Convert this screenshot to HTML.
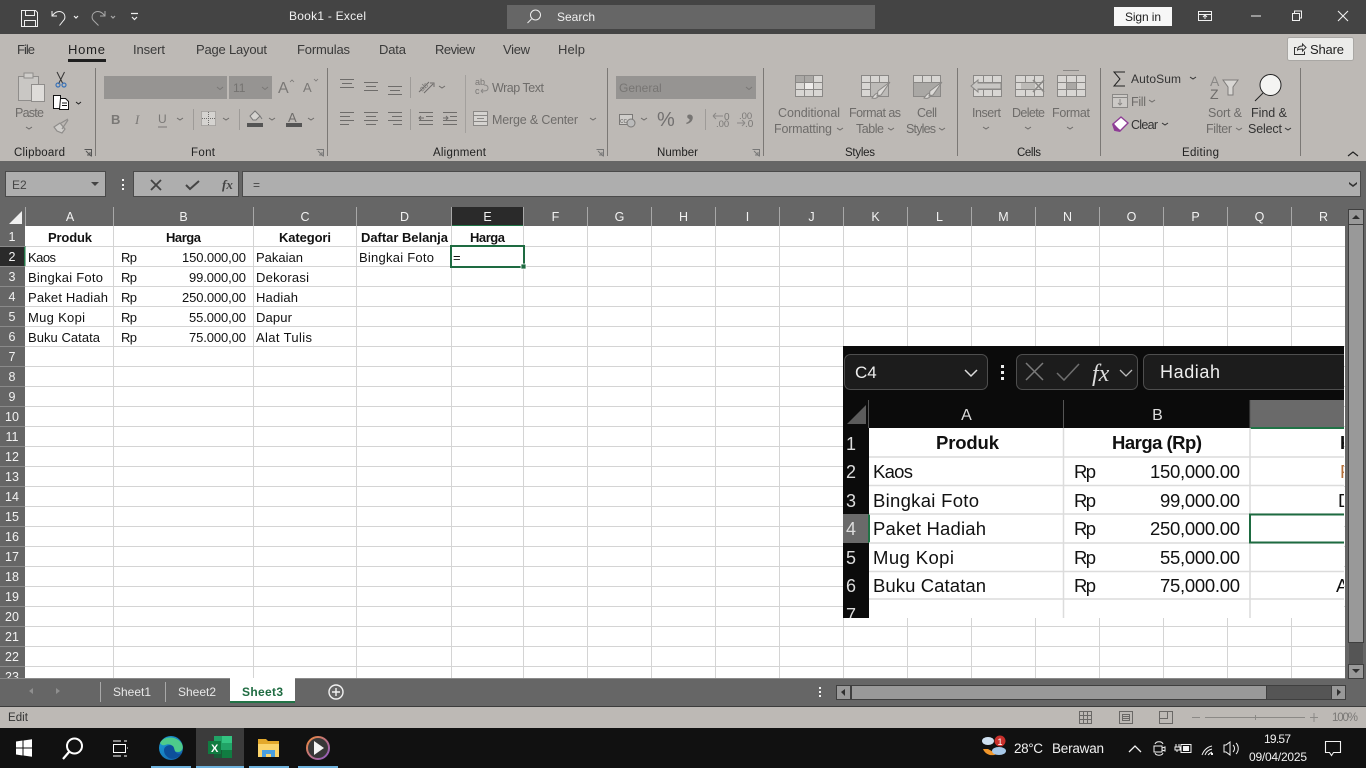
<!DOCTYPE html>
<html><head><meta charset="utf-8"><title>Book1 - Excel</title>
<style>
html,body{margin:0;padding:0;width:1366px;height:768px;overflow:hidden;background:#666}
svg{display:block;font-family:"Liberation Sans",sans-serif}
.r{font-size:13px;fill:#3a3a3a}
.d{font-size:12.5px;fill:#6e6c6a}
.c{font-size:13px;fill:#111}
.b{font-size:13px;fill:#111;font-weight:bold}
.h{font-size:12.5px;fill:#f2f2f2;text-anchor:middle}
.e{font-size:18.5px;fill:#111}
.ln{fill:none;stroke:#6e6c6a;stroke-width:1}
</style></head><body>
<svg width="1366" height="768" viewBox="0 0 1366 768" xmlns="http://www.w3.org/2000/svg">
<rect width="1366" height="768" fill="#666"/>
<!-- title bar -->
<rect width="1366" height="34" fill="#444"/>
<g fill="none" stroke="#f0f0f0" stroke-width="1">
<path d="M21.5 10.5h14l2 2v14h-16zM25.5 10.5v5h9v-5M24.5 26.5v-6h11v6"/>
<path d="M52 11v5h5M52.5 15.5c3-4 7-5 10-3 3 2 3 6 1 8l-4 5"/>
<path d="M74 16l2 2 2-2" stroke-width="1.2"/>
<path d="M105 11v5h-5M104.500 15.500c-3-4-7-5-10-3-3 2-3 6-1 8l5 5" stroke="#a8a8a8"/>
<path d="M111 16l2 2 2-2" stroke="#a8a8a8" stroke-width="1.2"/>
<path d="M131 13.500h7M132 17l2.500 2.500 2.500-2.500" stroke-width="1.2"/>
</g>
<text x="289" y="20" font-size="12" fill="#f2f2f2" textLength="77">Book1  -  Excel</text>
<rect x="507" y="5" width="368" height="24" fill="#666"/>
<circle cx="535.500" cy="15" r="5" fill="none" stroke="#eee"/><path d="M531.500 19l-4 4" stroke="#eee"/>
<text x="557" y="21" font-size="12" fill="#f0f0f0" textLength="38">Search</text>
<rect x="1114" y="7" width="58" height="19" fill="#f7f7f7"/>
<text x="1125" y="21" font-size="12" fill="#222" textLength="36">Sign in</text>
<g fill="none" stroke="#f0f0f0">
<path d="M1198.500 11.500h13v9h-13zM1198.500 14.500h13M1205 19v-4M1203 17l2-2 2 2"/>
<path d="M1251 16h10"/>
<path d="M1292.500 13.500h7v7h-7zM1294.500 13v-2h7v7h-2"/>
<path d="M1338 11l10 10M1348 11l-10 10" stroke-width="1.100"/>
</g>
<!-- ribbon -->
<rect y="34" width="1366" height="127" fill="#bdb9b5"/>
<text class="r" x="17" y="54" textLength="18">File</text>
<text class="r" x="68" y="54" textLength="37" style="fill:#1f1f1f">Home</text>
<text class="r" x="133" y="54" textLength="32">Insert</text>
<text class="r" x="196" y="54" textLength="71">Page Layout</text>
<text class="r" x="297" y="54" textLength="53">Formulas</text>
<text class="r" x="379" y="54" textLength="27">Data</text>
<text class="r" x="435" y="54" textLength="40">Review</text>
<text class="r" x="503" y="54" textLength="27">View</text>
<text class="r" x="558" y="54" textLength="27">Help</text>
<rect x="68" y="59" width="38" height="3" fill="#1f1f1f"/>
<rect x="1287.500" y="37.500" width="66" height="23" rx="2" fill="#ececea" stroke="#a9a7a4"/>
<path d="M1296.500 47.500h-2v7h10v-3M1297.500 50c0-3 2-4 5-4v-2l3.500 3.500-3.500 3.500v-2c-2 0-4 0-5 1z" fill="none" stroke="#333"/>
<text x="1310" y="54" font-size="13" fill="#222" textLength="34">Share</text>
<!-- separators -->
<g stroke="#7b7875" stroke-width="1">
<path d="M95.500 68v88M327.500 68v88M607.500 68v88M763.500 68v88M957.500 68v88M1100.500 68v88M1300.500 68v88"/>
<path d="M465.500 75v58" stroke="#a3a09d"/>
<path d="M193.500 109v21M239.500 109v21M410.500 77v21M410.500 109v21M705.500 109v21" stroke="#9e9b98"/>
</g>
<!-- clipboard -->
<rect x="18.500" y="76.500" width="20" height="24" fill="#c9c7c4" stroke="#8f8d8b"/>
<rect x="24" y="73" width="9" height="5" fill="#cfcdca" stroke="#8f8d8b"/>
<rect x="31.500" y="84.500" width="13" height="17" fill="#dedcd9" stroke="#8f8d8b"/>
<text class="d" x="15" y="117" textLength="29">Paste</text>
<path class="ln" d="M26 127l3 2 3-2"/>
<path d="M57 72l6 12M64.500 72l-6 12" stroke="#333" fill="none"/>
<circle cx="58" cy="85" r="2" fill="none" stroke="#3a73b8" stroke-width="1.200"/><circle cx="64" cy="85" r="2" fill="none" stroke="#3a73b8" stroke-width="1.200"/>
<rect x="53.500" y="95.500" width="7" height="13" fill="#fff" stroke="#111"/>
<path d="M60.500 98.500h5l3 3v8h-9z" fill="#fff" stroke="#111"/><path d="M62 103h5M62 105.500h5" stroke="#111"/>
<path d="M76 102l2.500 2 2.500-2" fill="none" stroke="#222"/>
<path d="M54 127l6-4 5 6-3 4-5-2zM61 123l7-4M62 129l6-9" fill="#d0cecb" stroke="#8f8d8b" stroke-width="1.200"/>
<text x="14" y="156" font-size="11.500" fill="#222" textLength="51">Clipboard</text>
<path d="M84.500 149.500h7v7M86 151l5 5M90 152v3h-3" fill="none" stroke="#555"/>
<!-- font -->
<rect x="104" y="76" width="123" height="23" fill="#969492"/>
<rect x="229" y="76" width="43" height="23" fill="#969492"/>
<path d="M217 87l3 2.500 3-2.500M262 87l3 2.500 3-2.500" fill="none" stroke="#7a7876"/>
<text x="233" y="92" font-size="12" fill="#747270">11</text>
<text x="278" y="93" font-size="16" fill="#7a7876">A</text><text x="303" y="92" font-size="13" fill="#7a7876">A</text>
<path d="M290 82l2-2 2 2M314 79l2 2 2-2" fill="none" stroke="#7a7876" stroke-width=".8"/>
<text x="111" y="124" font-size="13" font-weight="bold" fill="#7a7876">B</text>
<text x="135" y="124" font-size="13" font-style="italic" fill="#7a7876" font-family="Liberation Serif">I</text>
<text x="158" y="123" font-size="12" fill="#7a7876">U</text><path d="M158 127h9" stroke="#7a7876"/>
<path d="M177 118l3 2 3-2M223 118l3 2 3-2M269 118l3 2 3-2M308 118l3 2 3-2" fill="none" stroke="#6e6c6a"/>
<rect x="201.500" y="111.500" width="14" height="14" fill="#d5d3d0" stroke="#8a8886" stroke-dasharray="1 1"/>
<path d="M208.500 112v13M202 118.500h13" stroke="#6e6c6a" stroke-dasharray="1 1"/>
<path d="M250 116l5-5 5 5-4 4h-3zM260 116l2 3" fill="#d5d3d0" stroke="#777"/>
<rect x="247" y="123" width="16" height="4" fill="#555"/>
<text x="288" y="122" font-size="13" fill="#6e6c6a">A</text>
<rect x="286" y="123" width="16" height="4" fill="#555"/>
<text x="191" y="156" font-size="11.500" fill="#222" textLength="24">Font</text>
<path d="M316.500 149.500h7v7M318 151l5 5M322 152v3h-3" fill="none" stroke="#777"/>
<!-- alignment -->
<g class="ln" stroke="#7a7876">
<path d="M340 79.500h14M342 83.500h10M340 87.500h14M364 82.500h14M366 86.500h10M364 90.500h14M388 86.500h14M390 90.500h10M388 94.500h14"/>
<path d="M340 112.500h14M340 116.500h10M340 120.500h14M340 124.500h9M364 112.500h14M366 116.500h10M364 120.500h14M366 124.500h10M388 112.500h14M392 116.500h10M388 120.500h14M393 124.500h9"/>
<path d="M419 112.500h14M426 116.500h7M419 120.500h14M419 124.500h14M419 118h5M421 116l-2 2 2 2M443 112.500h14M450 116.500h7M443 120.500h14M443 124.500h14M443 118h5M446 116l2 2-2 2"/>
<path d="M419 92l10-10M424 93l9-9M430 83h4v4"/>
<path d="M439 86l3 2 3-2"/>
<path d="M590 118l3 2 3-2"/>
</g>
<text x="419" y="90" font-size="8" fill="#7a7876" transform="rotate(-45 423 87)">ab</text>
<text x="475" y="85" font-size="9" fill="#7a7876">ab</text><text x="475" y="94" font-size="9" fill="#7a7876">c</text>
<path d="M481 91c5 0 7 0 7-3s-3-3-4-3M481 91l2-2M481 91l2 2" fill="none" stroke="#8a8886"/>
<text class="d" x="492" y="92" textLength="52">Wrap Text</text>
<rect x="473.500" y="111.500" width="14" height="14" fill="#d5d3d0" stroke="#8a8886"/>
<path d="M474 115.500h13M474 121.500h13M477 118.500h7" stroke="#8a8886"/>
<text class="d" x="492" y="124" textLength="86">Merge &amp; Center</text>
<text x="433" y="156" font-size="11.500" fill="#222" textLength="53">Alignment</text>
<path d="M596.500 149.500h7v7M598 151l5 5M602 152v3h-3" fill="none" stroke="#777"/>
<!-- number -->
<rect x="616" y="76" width="140" height="23" fill="#969492"/>
<text x="619" y="92" font-size="12" fill="#777573">General</text>
<path d="M746 87l3 2.500 3-2.500" fill="none" stroke="#7a7876"/>
<rect x="619.500" y="114.500" width="13" height="10" fill="#cfcdca" stroke="#7a7876"/><text x="620" y="123" font-size="7" fill="#6e6c6a">cc</text>
<ellipse cx="631" cy="123" rx="4" ry="4" fill="#bbb" stroke="#7a7876"/>
<path d="M641 118l3 2 3-2" fill="none" stroke="#6e6c6a"/>
<text x="657" y="126" font-size="20" fill="#727070" textLength="17">%</text>
<text x="686" y="119" font-size="32" font-weight="bold" fill="#777573" font-family="Liberation Serif">,</text>
<text x="724" y="120" font-size="10" fill="#7a7876">0</text><text x="716" y="127" font-size="9.500" fill="#7a7876">.00</text>
<path d="M713 116h10M713 116l3-3M713 116l3 3" stroke="#8a8886" fill="none"/>
<text x="739" y="119" font-size="9.500" fill="#7a7876">.00</text><text x="745" y="127" font-size="10" fill="#7a7876">.0</text>
<path d="M737 123h8M745 123l-3-3M745 123l-3 3" stroke="#8a8886" fill="none"/>
<text x="657" y="156" font-size="11.500" fill="#222" textLength="41">Number</text>
<path d="M752.500 149.500h7v7M754 151l5 5M758 152v3h-3" fill="none" stroke="#777"/>
<!-- styles -->
<g fill="#d8d6d3" stroke="#8a8886">
<rect x="795.500" y="75.500" width="27" height="21"/>
<path fill="none" d="M795 82.500h28M795 89.500h28M804.500 75v22M813.500 75v22"/>
<rect x="805" y="83" width="8" height="6" fill="#eeecea" stroke="none"/>
<rect x="796" y="76" width="8" height="6" fill="#aaa8a5" stroke="none"/>
<rect x="805" y="76" width="8" height="6" fill="#aaa8a5" stroke="none"/>
<rect x="861.500" y="75.500" width="27" height="21"/>
<path fill="none" d="M861 82.500h28M861 89.500h28M870.500 75v22M879.500 75v22"/>
<rect x="871" y="83" width="17" height="13" fill="#bcbab7" stroke="none"/>
<path d="M890 82l-9 13-4 1 1-5zM878 93c-3 0-4 3-6 5 3 1 6 0 7-3" fill="#dddbd8"/>
<rect x="913.500" y="75.500" width="27" height="21"/>
<path fill="none" d="M913 82.500h28M913 89.500h28M922.500 75v22M931.500 75v22"/>
<rect x="914" y="83" width="26" height="13" fill="#aaa8a5" stroke="none"/>
<path d="M942 82l-9 13-4 1 1-5zM930 93c-3 0-4 3-6 5 3 1 6 0 7-3" fill="#dddbd8"/>
</g>
<text class="d" x="778" y="117" textLength="62">Conditional</text>
<text class="d" x="774" y="133" textLength="58">Formatting</text><path class="ln" d="M837 128l3 2 3-2"/>
<text class="d" x="849" y="117" textLength="52">Format as</text>
<text class="d" x="856" y="133" textLength="28">Table</text><path class="ln" d="M888 128l3 2 3-2"/>
<text class="d" x="917" y="117" textLength="20">Cell</text>
<text class="d" x="906" y="133" textLength="30">Styles</text><path class="ln" d="M939 128l3 2 3-2"/>
<text x="845" y="156" font-size="11.500" fill="#222" textLength="30">Styles</text>
<!-- cells -->
<g fill="#d8d6d3" stroke="#8a8886">
<rect x="973.500" y="75.500" width="28" height="21"/><path fill="none" d="M973 82.500h29M973 89.500h29M983.500 75v22M992.500 75v22"/>
<path d="M971 86l7-6v3h23v6h-23v3z" fill="#c8c6c3"/>
<rect x="1015.500" y="75.500" width="28" height="21"/><path fill="none" d="M1015 82.500h29M1015 89.500h29M1025.500 75v22M1034.500 75v22"/>
<rect x="1021" y="83" width="14" height="6" fill="#bcbab7" stroke="none"/>
<path d="M1033 80l11 12M1044 80l-11 12" fill="none" stroke-width="1.600"/>
<rect x="1057.500" y="75.500" width="28" height="21"/><path fill="none" d="M1057 82.500h29M1057 89.500h29M1066.500 75v22M1076.500 75v22M1063 70.500h16"/>
<rect x="1067" y="83" width="9" height="6" fill="#aaa8a5" stroke="none"/>
</g>
<text class="d" x="972" y="117" textLength="29">Insert</text>
<text class="d" x="1012" y="117" textLength="33">Delete</text>
<text class="d" x="1052" y="117" textLength="38">Format</text>
<path class="ln" d="M983 127l3 2 3-2M1025 127l3 2 3-2M1067 127l3 2 3-2"/>
<text x="1017" y="156" font-size="11.500" fill="#222" textLength="24">Cells</text>
<!-- editing -->
<path d="M1125 72h-11l6 7-6 7h11" fill="none" stroke="#222"/>
<text x="1131" y="83" font-size="12" fill="#333" textLength="50">AutoSum</text>
<path d="M1190 77l3 2 3-2" fill="none" stroke="#333"/>
<rect x="1112.500" y="94.500" width="15" height="13" fill="#ccc9c6" stroke="#8a8886"/>
<path d="M1113 97.500h14M1120 99v6M1118 103l2 2 2-2" fill="none" stroke="#8a8886"/>
<text class="d" x="1131" y="106" textLength="15">Fill</text><path class="ln" d="M1149 100l3 2 3-2"/>
<path d="M1113 124l8-7 7 6-8 8z" fill="#fff" stroke="#8e3d96" stroke-width="1.400"/>
<path d="M1113 124l4 5 3 2-5-1z" fill="#a84aae" stroke="#8e3d96" stroke-width="2"/>
<text x="1131" y="129" font-size="12.500" fill="#333" textLength="27">Clear</text>
<path d="M1162 123l3 2 3-2" fill="none" stroke="#333"/>
<text x="1210" y="86" font-size="14" fill="#8a8886">A</text><text x="1210" y="99" font-size="14" fill="#6e6c6a">Z</text>
<path d="M1223 80h15l-5 7v8h-5v-8z" fill="#d8d6d3" stroke="#7e7c7a"/>
<circle cx="1270.500" cy="85" r="10.500" fill="#f4f4f2" stroke="#222"/><path d="M1263 93l-8 8" stroke="#222"/>
<text class="d" x="1208" y="117" textLength="34">Sort &amp;</text>
<text class="d" x="1206" y="133" textLength="26">Filter</text><path class="ln" d="M1236 128l3 2 3-2"/>
<text x="1251" y="117" font-size="12.500" fill="#333" textLength="36">Find &amp;</text>
<text x="1248" y="133" font-size="12.500" fill="#333" textLength="34">Select</text><path d="M1285 128l3 2 3-2" fill="none" stroke="#333"/>
<text x="1182" y="156" font-size="11.500" fill="#222" textLength="37">Editing</text>
<path d="M1348 156l5-4 5 4" fill="none" stroke="#222" stroke-width="1.200"/>
<!-- formula bar -->
<rect x="5.500" y="171.500" width="100" height="25" fill="#aeaeae" stroke="#4a4a4a"/>
<text x="12" y="189" font-size="12" fill="#444">E2</text>
<path d="M91 182h8l-4 4z" fill="#444"/>
<rect x="122" y="179" width="2" height="2" fill="#f5f5f5"/><rect x="122" y="184" width="2" height="2" fill="#f5f5f5"/><rect x="122" y="188" width="2" height="2" fill="#f5f5f5"/>
<rect x="133.500" y="171.500" width="105" height="25" fill="#aeaeae" stroke="#4a4a4a"/>
<rect x="242.500" y="171.500" width="1118" height="25" fill="#aeaeae" stroke="#4a4a4a"/>
<path d="M151 180l10 10M161 180l-10 10" stroke="#444" stroke-width="1.800"/>
<path d="M186 185l4 4 9-8" fill="none" stroke="#444" stroke-width="2"/>
<text x="222" y="189" font-size="13" font-style="italic" font-weight="bold" fill="#444" font-family="Liberation Serif">fx</text>
<text x="253" y="189" font-size="12" fill="#444">=</text>
<path d="M1349 182l4 3 4-3v2l-4 3-4-3z" fill="#333"/>
<!-- col headers -->
<rect y="207" width="1345" height="19" fill="#666"/>
<rect x="451" y="207" width="72" height="19" fill="#2a2a2a"/>
<rect x="451" y="225" width="72" height="1.500" fill="#217346"/>
<path d="M9 224l13-13v13z" fill="#f0f0f0"/>
<g stroke="#a8a8a8"><path d="M25.500 207v19M113.500 207v19M253.500 207v19M356.500 207v19M451.500 207v19M523.500 207v19M587.500 207v19M651.500 207v19M715.500 207v19M779.500 207v19M843.500 207v19M907.500 207v19M971.500 207v19M1035.500 207v19M1099.500 207v19M1163.500 207v19M1227.500 207v19M1291.500 207v19"/></g>
<text class="h" x="70" y="221">A</text><text class="h" x="183.500" y="221">B</text><text class="h" x="305" y="221">C</text><text class="h" x="404.500" y="221">D</text><text class="h" x="487.500" y="221">E</text><text class="h" x="555.500" y="221">F</text><text class="h" x="619.500" y="221">G</text><text class="h" x="683.500" y="221">H</text><text class="h" x="747.500" y="221">I</text><text class="h" x="811.500" y="221">J</text><text class="h" x="875.500" y="221">K</text><text class="h" x="939.500" y="221">L</text><text class="h" x="1003.500" y="221">M</text><text class="h" x="1067.500" y="221">N</text><text class="h" x="1131.500" y="221">O</text><text class="h" x="1195.500" y="221">P</text><text class="h" x="1259.500" y="221">Q</text><text class="h" x="1323.500" y="221">R</text>
<!-- sheet -->
<rect x="25" y="226" width="1320" height="452" fill="#fff"/>
<g stroke="#d4d4d4">
<path d="M25 246.500h1320M25 266.500h1320M25 286.500h1320M25 306.500h1320M25 326.500h1320M25 346.500h1320M25 366.500h1320M25 386.500h1320M25 406.500h1320M25 426.500h1320M25 446.500h1320M25 466.500h1320M25 486.500h1320M25 506.500h1320M25 526.500h1320M25 546.500h1320M25 566.500h1320M25 586.500h1320M25 606.500h1320M25 626.500h1320M25 646.500h1320M25 666.500h1320"/>
<path d="M113.500 226v452M253.500 226v452M356.500 226v452M451.500 226v452M523.500 226v452M587.500 226v452M651.500 226v452M715.500 226v452M779.500 226v452M843.500 226v452M907.500 226v452M971.500 226v452M1035.500 226v452M1099.500 226v452M1163.500 226v452M1227.500 226v452M1291.500 226v452"/>
</g>
<!-- row headers -->
<rect y="226" width="25" height="452" fill="#666"/>
<rect y="246" width="25" height="20" fill="#2a2a2a"/><rect x="24" y="246" width="1.500" height="20" fill="#217346"/>
<path stroke="#8a8a8a" d="M0 246.500h25M0 266.500h25M0 286.500h25M0 306.500h25M0 326.500h25M0 346.500h25M0 366.500h25M0 386.500h25M0 406.500h25M0 426.500h25M0 446.500h25M0 466.500h25M0 486.500h25M0 506.500h25M0 526.500h25M0 546.500h25M0 566.500h25M0 586.500h25M0 606.500h25M0 626.500h25M0 646.500h25M0 666.500h25"/>
<g>
<text class="h" x="12" y="241">1</text><text class="h" x="12" y="261">2</text><text class="h" x="12" y="281">3</text><text class="h" x="12" y="301">4</text><text class="h" x="12" y="321">5</text><text class="h" x="12" y="341">6</text><text class="h" x="12" y="361">7</text><text class="h" x="12" y="381">8</text><text class="h" x="12" y="401">9</text><text class="h" x="12" y="421">10</text><text class="h" x="12" y="441">11</text><text class="h" x="12" y="461">12</text><text class="h" x="12" y="481">13</text><text class="h" x="12" y="501">14</text><text class="h" x="12" y="521">15</text><text class="h" x="12" y="541">16</text><text class="h" x="12" y="561">17</text><text class="h" x="12" y="581">18</text><text class="h" x="12" y="601">19</text><text class="h" x="12" y="621">20</text><text class="h" x="12" y="641">21</text><text class="h" x="12" y="661">22</text>
</g>
<svg x="0" y="667" width="25" height="11"><text class="h" x="12" y="14">23</text></svg>
<!-- cell text -->
<text class="b" x="48" y="242" textLength="44">Produk</text>
<text class="b" x="166" y="242" textLength="35">Harga</text>
<text class="b" x="279" y="242" textLength="52">Kategori</text>
<text class="b" x="361" y="242" textLength="87">Daftar Belanja</text>
<text class="b" x="470" y="242" textLength="35">Harga</text>
<text class="c" x="28" y="262" textLength="28">Kaos</text>
<text class="c" x="28" y="282" textLength="75">Bingkai Foto</text>
<text class="c" x="28" y="302" textLength="80">Paket Hadiah</text>
<text class="c" x="28" y="322" textLength="57">Mug Kopi</text>
<text class="c" x="28" y="342" textLength="72">Buku Catata</text>
<text class="c" x="121" y="262" textLength="16">Rp</text><text class="c" x="121" y="282" textLength="16">Rp</text><text class="c" x="121" y="302" textLength="16">Rp</text><text class="c" x="121" y="322" textLength="16">Rp</text><text class="c" x="121" y="342" textLength="16">Rp</text>
<text class="c" x="182" y="262" textLength="64">150.000,00</text>
<text class="c" x="189" y="282" textLength="57">99.000,00</text>
<text class="c" x="182" y="302" textLength="64">250.000,00</text>
<text class="c" x="189" y="322" textLength="57">55.000,00</text>
<text class="c" x="189" y="342" textLength="57">75.000,00</text>
<text class="c" x="256" y="262" textLength="47">Pakaian</text>
<text class="c" x="256" y="282" textLength="53">Dekorasi</text>
<text class="c" x="256" y="302" textLength="42">Hadiah</text>
<text class="c" x="256" y="322" textLength="36">Dapur</text>
<text class="c" x="256" y="342" textLength="56">Alat Tulis</text>
<text class="c" x="359" y="262" textLength="75">Bingkai Foto</text>
<text class="c" x="453" y="262">=</text>
<rect x="451" y="246" width="73" height="21" fill="none" stroke="#1e6b41" stroke-width="2"/>
<rect x="521" y="264" width="5" height="5" fill="#1e6b41" stroke="#fff" stroke-width=".8"/>
<!-- embedded screenshot -->
<svg x="843" y="346" width="501" height="272" viewBox="843 346 501 272">
<rect x="843" y="346" width="501" height="272" fill="#fff"/>
<rect x="843" y="346" width="501" height="82" fill="#0b0b0b"/>
<rect x="844.500" y="354.500" width="143" height="35" rx="6" fill="#1c1c1c" stroke="#4e4e4e"/>
<text x="855" y="378" font-size="17" fill="#eee">C4</text>
<path d="M965 370l6 6 6-6" fill="none" stroke="#ddd" stroke-width="1.500"/>
<rect x="1001" y="365" width="3" height="3" fill="#eee"/><rect x="1001" y="371" width="3" height="3" fill="#eee"/><rect x="1001" y="377" width="3" height="3" fill="#eee"/>
<rect x="1016.500" y="354.500" width="121" height="35" rx="6" fill="#1c1c1c" stroke="#4e4e4e"/>
<rect x="1143.500" y="354.500" width="220" height="35" rx="6" fill="#1c1c1c" stroke="#4e4e4e"/>
<path d="M1026 363l17 17M1043 363l-17 17" stroke="#7a7a7a" stroke-width="1.500"/>
<path d="M1057 373l7 7 15-16" fill="none" stroke="#6e6e6e" stroke-width="1.500"/>
<text x="1092" y="381" font-size="24" font-style="italic" fill="#ddd" font-family="Liberation Serif">fx</text>
<path d="M1120 370l6 6 6-6" fill="none" stroke="#bbb" stroke-width="1.300"/>
<text x="1160" y="378" font-size="18" fill="#eee" textLength="60">Hadiah</text>
<rect x="843" y="400" width="501" height="28" fill="#0b0b0b"/>
<rect x="1250" y="400" width="94" height="28" fill="#6a6a6a"/>
<rect x="1250" y="427" width="94" height="2" fill="#217346"/>
<path d="M847 424l19-19v19z" fill="#5c5c5c"/>
<path d="M868.500 400v218M1063.500 400v28M1250 400v28" stroke="#555"/>
<text x="966.500" y="420" font-size="16" fill="#ddd" text-anchor="middle">A</text><text x="1157.500" y="420" font-size="16" fill="#ddd" text-anchor="middle">B</text>
<rect x="843" y="428" width="26" height="190" fill="#0b0b0b"/>
<rect x="843" y="514" width="26" height="29" fill="#6a6a6a"/><rect x="868" y="514" width="2" height="29" fill="#217346"/>
<g font-size="18" fill="#ddd" text-anchor="middle"><text x="851" y="450">1</text><text x="851" y="478">2</text><text x="851" y="507">3</text><text x="851" y="535">4</text><text x="851" y="564">5</text><text x="851" y="592">6</text><text x="851" y="621">7</text></g>
<g stroke="#dcdcdc" stroke-width="1.500"><path d="M869 457h475M869 485.500h475M869 514h475M869 543h475M869 571.500h475M869 599h475M1063.500 428v190M1250 428v190"/></g>
<text class="e" x="936" y="449" font-weight="bold" textLength="63">Produk</text>
<text class="e" x="1112" y="449" font-weight="bold" textLength="90">Harga (Rp)</text>
<text class="e" x="873" y="478" textLength="40">Kaos</text><text class="e" x="873" y="507" textLength="106">Bingkai Foto</text><text class="e" x="873" y="535" textLength="113">Paket Hadiah</text><text class="e" x="873" y="564" textLength="81">Mug Kopi</text><text class="e" x="873" y="592" textLength="113">Buku Catatan</text>
<text class="e" x="1074" y="478" textLength="22">Rp</text><text class="e" x="1074" y="507" textLength="22">Rp</text><text class="e" x="1074" y="535" textLength="22">Rp</text><text class="e" x="1074" y="564" textLength="22">Rp</text><text class="e" x="1074" y="592" textLength="22">Rp</text>
<text class="e" x="1150" y="478" textLength="90">150,000.00</text><text class="e" x="1160" y="507" textLength="80">99,000.00</text><text class="e" x="1150" y="535" textLength="90">250,000.00</text><text class="e" x="1160" y="564" textLength="80">55,000.00</text><text class="e" x="1160" y="592" textLength="80">75,000.00</text>
<rect x="1250" y="514.500" width="100" height="28" fill="none" stroke="#1e6b41" stroke-width="2"/>
<text class="e" x="1340" y="449" font-weight="bold">K</text><text class="e" x="1340" y="478" style="fill:#b5703a">P</text><text class="e" x="1338" y="507">D</text><text class="e" x="1336" y="592">A</text>
</svg>
<!-- right bar & vertical scrollbar -->
<rect x="1345" y="207" width="21" height="500" fill="#666"/>
<rect x="1348.500" y="209.500" width="15" height="15" fill="#999" stroke="#3f3f3f"/><path d="M1352 219l4-4 4 4z" fill="#2f2f2f"/>
<rect x="1348.500" y="224.500" width="15" height="418" fill="#999" stroke="#3f3f3f"/>
<rect x="1349" y="643" width="14" height="21" fill="#555"/>
<rect x="1348.500" y="664.500" width="15" height="14" fill="#999" stroke="#3f3f3f"/><path d="M1352 669l4 4 4-4z" fill="#2f2f2f"/>
<!-- sheet tabs -->
<rect y="678" width="1345" height="28" fill="#666"/>
<path d="M0 678.500h1345" stroke="#8a8a8a"/>
<path d="M33 688v6l-4-3zM56 688v6l4-3z" fill="#8f8f8f"/>
<path stroke="#a8a8a8" d="M100.500 682v20M165.500 682v20"/>
<text x="113" y="696" font-size="12" fill="#e8e8e8" textLength="38">Sheet1</text>
<text x="178" y="696" font-size="12" fill="#e8e8e8" textLength="38">Sheet2</text>
<rect x="230" y="678" width="65" height="25" fill="#fff"/><rect x="230" y="701" width="65" height="2" fill="#217346"/>
<text x="242" y="696" font-size="12" font-weight="bold" fill="#1e6b41" textLength="41">Sheet3</text>
<circle cx="336" cy="692" r="7" fill="none" stroke="#f2f2f2" stroke-width="1.400"/><path d="M332 692h8M336 688v8" stroke="#f2f2f2" stroke-width="1.400"/>
<rect x="819" y="687" width="2" height="2" fill="#f2f2f2"/><rect x="819" y="691" width="2" height="2" fill="#f2f2f2"/><rect x="819" y="695" width="2" height="2" fill="#f2f2f2"/>
<rect x="836.500" y="685.500" width="14" height="14" fill="#999" stroke="#3f3f3f"/><path d="M841 692l4-3v7z" fill="#2f2f2f"/>
<rect x="851.500" y="685.500" width="415" height="14" fill="#999" stroke="#3f3f3f"/>
<rect x="1267" y="686" width="64" height="13" fill="#555"/>
<rect x="1331.500" y="685.500" width="14" height="14" fill="#999" stroke="#3f3f3f"/><path d="M1341 692l-4-3v7z" fill="#2f2f2f"/>
<path d="M1331 685.500h-65M1331 699.500h-65" stroke="#3f3f3f"/>
<!-- status bar -->
<rect y="706" width="1366" height="1.500" fill="#3c3c3c"/>
<rect y="707" width="1366" height="21" fill="#bdb9b5"/>
<text x="8" y="721" font-size="11.500" fill="#333" textLength="20">Edit</text>
<g fill="none" stroke="#6a6866">
<path d="M1079.500 711.500h12v12h-12zM1083.500 711.500v12M1087.500 711.500v12M1079.500 715.500h12M1079.500 719.500h12"/>
<path d="M1119.500 711.500h13v12h-13zM1122.500 714.500h7v6h-7zM1123 716.500h6M1123 718.500h6"/>
<path d="M1159.500 711.500h13v12h-13zM1159.500 718.500h8v-7"/>
</g>
<path d="M1192 717.500h8M1205 717.500h100M1310 717.500h8M1314 713v9M1255.500 715v5" stroke="#8b8986" fill="none"/>
<text x="1332" y="721" font-size="11.500" fill="#7a7876" textLength="26">100%</text>
<!-- taskbar -->
<rect y="728" width="1366" height="40" fill="#111"/>
<rect x="196" y="728" width="48" height="40" fill="#3b3b3b"/>
<g fill="#6fb3de"><rect x="151" y="766" width="40" height="2"/><rect x="196" y="766" width="48" height="2"/><rect x="249" y="766" width="40" height="2"/><rect x="298" y="766" width="40" height="2"/></g>
<path d="M16 741.500l6.500-1v7h-6.500zM23.500 740.500l8.500-1.300v8.300h-8.500zM16 748.500h6.500v7l-6.500-1zM23.500 748.500h8.500v8.300l-8.500-1.300z" fill="#fff"/>
<circle cx="74.500" cy="746" r="7.500" fill="none" stroke="#fff" stroke-width="2"/><path d="M69 752l-6 7" stroke="#fff" stroke-width="2.200"/>
<path d="M113 741h8M113 756h8M113.500 744.500h12v8h-12zM124 741h3M124 756h3M127 748h1" stroke="#fff" fill="none"/>
<defs><linearGradient id="eg" x1="0" y1="0" x2="1" y2="1"><stop offset="0" stop-color="#1a9ed8"/><stop offset="1" stop-color="#155fa8"/></linearGradient></defs>
<circle cx="171" cy="748" r="12" fill="url(#eg)"/>
<path d="M160 743c3-7 17-8 22 1 2 4 0 8-4 8-4 0-5-2-5-4 0-3-4-5-8-3-3 1-4-1-5-2z" fill="#4ecb8b"/>
<path d="M164 750c0-5 9-7 10-2 1 5 4 7 8 5-3 5-9 7-13 5-3-2-5-4-5-8z" fill="#0d4f9a"/>
<rect x="214" y="736" width="18" height="22" fill="#21a366"/><rect x="222" y="736" width="10" height="7" fill="#33c481"/><rect x="222" y="750" width="10" height="8" fill="#107c41"/><rect x="214" y="750" width="8" height="8" fill="#185c37"/>
<rect x="208" y="741" width="13" height="13" fill="#107c41"/>
<text x="211" y="752" font-size="11" font-weight="bold" fill="#fff">X</text>
<path d="M258 739h8l2 2h11v16h-21z" fill="#e3a82b"/><path d="M258 744h21v13h-21z" fill="#fbd46b"/>
<rect x="262" y="750" width="13" height="7" fill="#4a9fe0"/><rect x="266" y="754" width="5" height="3" fill="#fbd46b"/>
<defs><linearGradient id="mg" x1="0" y1="0" x2="1" y2="1"><stop offset="0" stop-color="#f08a3c"/><stop offset="1" stop-color="#8a5ac8"/></linearGradient></defs>
<circle cx="318" cy="748" r="11" fill="#383838" stroke="url(#mg)" stroke-width="2"/>
<path d="M314 741l10 7-10 7z" fill="#f4f4f4"/>
<!-- tray -->
<ellipse cx="988" cy="741" rx="6" ry="4" fill="#cfe0f0"/><path d="M983 749c3 7 10 7 14 5l-9-5z" fill="#f0962b"/>
<ellipse cx="999" cy="751" rx="7" ry="4" fill="#a7c8e8"/>
<circle cx="1000" cy="741" r="5.500" fill="#c9302c"/><text x="1000" y="745" font-size="9" fill="#fff" text-anchor="middle">1</text>
<text x="1014" y="753" font-size="13.500" fill="#f0f0f0" textLength="29">28°C</text>
<text x="1052" y="753" font-size="13.500" fill="#f0f0f0" textLength="52">Berawan</text>
<path d="M1129 752l6-6 6 6" fill="none" stroke="#f2f2f2" stroke-width="1.300"/>
<g fill="none" stroke="#f2f2f2">
<path d="M1155 744c1-3 7-3 8 0M1155 753c1 3 7 3 8 0M1154 746h8v6h-8zM1162 748l3-1v4l-3-1"/>
<path d="M1176 744v3M1179 744v3M1175 747h5v3h-5zM1177 750v2M1181 744.500h10v8h-10z"/>
<path d="M1202 755c2-5 5-8 10-9M1205 755c1-3 3-5 7-6M1208 755c1-1 2-2 4-3"/>
<path d="M1224 745h2l4-3v13l-4-3h-2zM1233 745c2 2 2 5 0 7M1236 743c3 3 3 8 0 11"/>
</g>
<rect x="1183" y="746" width="6" height="5" fill="#f2f2f2"/>
<rect x="1211" y="753" width="2" height="2" fill="#f2f2f2"/>
<text x="1264" y="743" font-size="12" fill="#f0f0f0" textLength="27">19.57</text>
<text x="1249" y="761" font-size="12" fill="#f0f0f0" textLength="58">09/04/2025</text>
<path d="M1325.500 741.500h15v11h-7l-2 3-2-3h-4z" fill="none" stroke="#f2f2f2" stroke-width="1.100"/>
</svg>
</body></html>
